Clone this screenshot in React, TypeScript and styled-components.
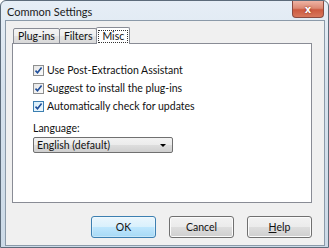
import styled, { createGlobalStyle } from 'styled-components'

const GlobalStyle = createGlobalStyle`
  html, body {
    margin: 0;
    padding: 0;
    background: #fff;
  }
  body {
    font-family: Lato, 'Noto Sans', sans-serif;
    font-size: 10.5px;
    color: #111;
  }
`

const Window = styled.div`
  box-sizing: border-box;
  width: 329px;
  height: 248px;
  display: flex;
  flex-direction: column;
  border: 1px solid #5c6b7a;
  border-radius: 6px 6px 0 0;
  background: linear-gradient(180deg, #e6eef6 0%, #d6e2ed 35%, #ccdae7 100%);
  overflow: hidden;
`

const TitleBar = styled.div`
  height: 19px;
  display: flex;
  justify-content: space-between;
  padding-left: 6px;
`

const Title = styled.span`
  align-self: center;
  padding-top: 2px;
  font-size: 11px;
  color: #1b1b1b;
`

const CloseButton = styled.div`
  box-sizing: border-box;
  width: 32px;
  height: 17px;
  margin-right: 4px;
  display: flex;
  align-items: center;
  justify-content: center;
  border: 1px solid #8a4a40;
  border-top: none;
  border-radius: 0 0 4px 4px;
  background: linear-gradient(180deg, #eeb3a4 0%, #dc8a74 45%, #cc5a40 55%, #d8775c 100%);
  color: #fff;
  font-family: 'DejaVu Sans', sans-serif;
  font-weight: bold;
  font-size: 10px;
  text-shadow: 0 0 2px #7a2010;
`

const Client = styled.div`
  flex: 1;
  display: flex;
  flex-direction: column;
  margin: 0 3px 1px 4px;
  padding: 6px 12px 7px 6px;
  border: 1px solid #8b9aa9;
  background: #f0f0f0;
`

const TabStrip = styled.div`
  position: relative;
  z-index: 1;
  height: 17px;
  margin-bottom: -1px;
  padding-left: 1px;
  display: flex;
  align-items: flex-end;
`

const Tab = styled.div<{ $active?: boolean }>`
  box-sizing: border-box;
  height: ${(p) => (p.$active ? '17px' : '16px')};
  display: flex;
  align-items: center;
  padding: 0 ${(p) => (p.$active ? '2px' : '4px')};
  margin-left: -1px;
  border: 1px solid #898c95;
  border-bottom: ${(p) => (p.$active ? 'none' : '1px solid #898c95')};
  border-radius: 2px 2px 0 0;
  background: ${(p) =>
    p.$active ? '#fff' : 'linear-gradient(180deg, #f4f4f4 0%, #eeeeee 50%, #e3e3e3 51%, #d9d9d9 100%)'};
  &:first-child {
    margin-left: 0;
  }
`

const FocusRect = styled.span`
  padding: 0 3px;
  line-height: 11px;
  outline: 1px dotted #333;
`

const Panel = styled.div`
  box-sizing: border-box;
  height: 160px;
  padding: 17px 20px 0;
  border: 1px solid #898c95;
  background: #fff;
`

const CheckRow = styled.label`
  display: flex;
  align-items: center;
  gap: 3px;
  height: 18px;
`

const Box = styled.span<{ $hot?: boolean }>`
  box-sizing: border-box;
  width: 11px;
  height: 11px;
  display: flex;
  align-items: center;
  justify-content: center;
  border: 1px solid ${(p) => (p.$hot ? '#3c7fb1' : '#8e8f8f')};
  background: ${(p) =>
    p.$hot
      ? 'linear-gradient(135deg, #d8eefa 0%, #eef8fd 100%)'
      : 'linear-gradient(135deg, #e6e6e6 0%, #fafafa 100%)'};
`

const FieldLabel = styled.div`
  margin-top: 6px;
  height: 14px;
  line-height: 14px;
`

const Select = styled.div`
  box-sizing: border-box;
  width: 140px;
  height: 16px;
  margin-top: 2px;
  display: flex;
  align-items: center;
  justify-content: space-between;
  padding: 0 6px 0 3px;
  border: 1px solid #707070;
  border-radius: 2px;
  background: linear-gradient(180deg, #f2f2f2 0%, #ebebeb 50%, #dddddd 51%, #cfcfcf 100%);
`

const Arrow = styled.span`
  width: 0;
  height: 0;
  border-left: 3px solid transparent;
  border-right: 3px solid transparent;
  border-top: 3px solid #000;
`

const ButtonRow = styled.div`
  display: flex;
  justify-content: flex-end;
  gap: 13px;
  padding-top: 13px;
`

const Button = styled.div<{ $default?: boolean }>`
  box-sizing: border-box;
  width: 65px;
  height: 22px;
  display: flex;
  align-items: center;
  justify-content: center;
  border: 1px solid ${(p) => (p.$default ? '#3c7fb1' : '#707070')};
  border-radius: 3px;
  box-shadow: inset 0 0 0 1px ${(p) => (p.$default ? '#ffffff55' : '#fbfbfb')};
  background: ${(p) =>
    p.$default
      ? 'linear-gradient(180deg, #eaf6fd 0%, #d9f0fc 50%, #bee6fd 51%, #a7d9f5 100%)'
      : 'linear-gradient(180deg, #f2f2f2 0%, #ebebeb 50%, #dddddd 51%, #cfcfcf 100%)'};
  u {
    text-decoration-thickness: 1px;
    text-underline-offset: 1px;
  }
`

function Check({ hot }: { hot?: boolean }) {
  return (
    <Box $hot={hot}>
      <svg width="9" height="9" viewBox="0 0 9 9">
        <path d="M1.5 4.6 L3.5 6.8 L7.6 1.4" fill="none" stroke="#1f4e9a" strokeWidth="1.6" />
      </svg>
    </Box>
  )
}

const options = [
  { label: 'Use Post-Extraction Assistant' },
  { label: 'Suggest to install the plug-ins' },
  { label: 'Automatically check for updates', hot: true },
]

export default function App() {
  return (
    <>
      <GlobalStyle />
      <Window>
        <TitleBar>
          <Title>Common Settings</Title>
          <CloseButton>x</CloseButton>
        </TitleBar>
        <Client>
          <TabStrip>
            <Tab>Plug-ins</Tab>
            <Tab>Filters</Tab>
            <Tab $active>
              <FocusRect>Misc</FocusRect>
            </Tab>
          </TabStrip>
          <Panel>
            {options.map((o) => (
              <CheckRow key={o.label}>
                <Check hot={o.hot} />
                {o.label}
              </CheckRow>
            ))}
            <FieldLabel>Language:</FieldLabel>
            <Select>
              English (default)
              <Arrow />
            </Select>
          </Panel>
          <ButtonRow>
            <Button $default>OK</Button>
            <Button>Cancel</Button>
            <Button>
              <span>
                <u>H</u>elp
              </span>
            </Button>
          </ButtonRow>
        </Client>
      </Window>
    </>
  )
}
